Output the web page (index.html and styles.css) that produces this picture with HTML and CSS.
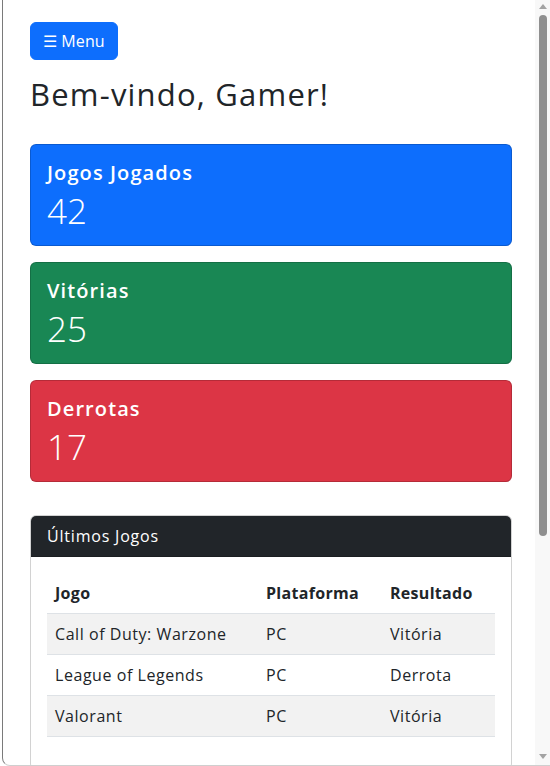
FILE: index.html
```html
<!DOCTYPE html>
<html lang="pt-BR">
<head>
<meta charset="utf-8">
<title>Dashboard Gamer</title>
<link rel="stylesheet" href="styles.css">
</head>
<body>
<div class="frame">
  <div class="viewport">
    <main class="page">
      <button class="btn-menu" type="button">☰ Menu</button>
      <h1 class="title">Bem-vindo, Gamer!</h1>

      <section class="stats">
        <div class="stat stat-blue">
          <h5 class="stat-title">Jogos Jogados</h5>
          <p class="stat-value">42</p>
        </div>
        <div class="stat stat-green">
          <h5 class="stat-title">Vitórias</h5>
          <p class="stat-value">25</p>
        </div>
        <div class="stat stat-red">
          <h5 class="stat-title">Derrotas</h5>
          <p class="stat-value">17</p>
        </div>
      </section>

      <section class="panel">
        <div class="panel-header">Últimos Jogos</div>
        <div class="panel-body">
          <table class="games">
            <thead>
              <tr>
                <th class="col-game">Jogo</th>
                <th class="col-plat">Plataforma</th>
                <th class="col-res">Resultado</th>
              </tr>
            </thead>
            <tbody>
              <tr class="striped"><td>Call of Duty: Warzone</td><td>PC</td><td>Vitória</td></tr>
              <tr><td>League of Legends</td><td>PC</td><td>Derrota</td></tr>
              <tr class="striped"><td>Valorant</td><td>PC</td><td>Vitória</td></tr>
            </tbody>
          </table>
        </div>
      </section>
    </main>
  </div>
  <div class="scrollbar" aria-hidden="true">
    <span class="arrow arrow-up"></span>
    <span class="thumb"></span>
    <span class="track-rest"></span>
    <span class="arrow arrow-down"></span>
  </div>
</div>
</body>
</html>
```

FILE: styles.css
```css
* { box-sizing: border-box; }

html, body {
  margin: 0;
  padding: 0;
  height: 100%;
  background: #ffffff;
  overflow: hidden;
}

body {
  font-family: "Open Sans", "Liberation Sans", sans-serif;
  color: #212529;
  font-size: 16px;
  line-height: 1.5;
}

.frame {
  display: flex;
  height: 766px;
  margin-left: 2px;
  border-left: 1px solid #7a7a7a;
  border-bottom: 1px solid #cfcfcf;
  border-bottom-left-radius: 8px;
  overflow: hidden;
  background: #ffffff;
}

.viewport {
  flex: 1 1 auto;
  min-width: 0;
  overflow: hidden;
}

.page {
  padding: 22px 23px 0 27px;
}

/* scrollbar rail */
.scrollbar {
  flex: 0 0 15px;
  display: flex;
  flex-direction: column;
  align-items: center;
  background: #f8f8f8;
  padding: 4px 0 6px;
}

.arrow {
  width: 0;
  height: 0;
  border-left: 4px solid transparent;
  border-right: 4px solid transparent;
}

.arrow-up {
  border-bottom: 5px solid #a3a3a3;
}

.arrow-down {
  border-top: 5px solid #a3a3a3;
}

.thumb {
  width: 8px;
  height: 521px;
  margin-top: 6px;
  border-radius: 4px;
  background: #8f8f8f;
}

.track-rest {
  flex: 1 1 auto;
}

.btn-menu {
  display: inline-block;
  font-family: inherit;
  font-size: 16px;
  line-height: 24px;
  color: #ffffff;
  background: #0d6efd;
  border: 1px solid #0d6efd;
  border-radius: 6px;
  padding: 6px 12px;
  letter-spacing: 0.1px;
  cursor: pointer;
}

.title {
  margin: 16px 0 32px;
  font-size: 31px;
  font-weight: 400;
  line-height: 36px;
  letter-spacing: 1.2px;
}

.stats {
  display: flex;
  flex-direction: column;
  gap: 16px;
  margin-bottom: 33px;
}

.stat {
  color: #ffffff;
  border: 1px solid rgba(0, 0, 0, 0.175);
  border-radius: 6px;
  padding: 16px;
}

.stat-blue { background: #0d6efd; }
.stat-green { background: #198754; }
.stat-red { background: #dc3545; }

.stat-title {
  margin: 0 0 8px;
  font-size: 20px;
  font-weight: 600;
  line-height: 24px;
  letter-spacing: 1.1px;
}

.stat-value {
  margin: 0;
  font-size: 35px;
  font-weight: 300;
  line-height: 36px;
}

.panel {
  border: 1px solid rgba(0, 0, 0, 0.175);
  border-radius: 6px;
}

.panel-header {
  background: #212529;
  color: #ffffff;
  padding: 8px 16px;
  line-height: 24px;
  letter-spacing: 0.8px;
  border-radius: 5px 5px 0 0;
  border-bottom: 1px solid rgba(0, 0, 0, 0.175);
}

.panel-body {
  padding: 16px;
}

.games {
  width: 100%;
  border-collapse: collapse;
  margin-bottom: 16px;
  table-layout: fixed;
}

.games th,
.games td {
  text-align: left;
  padding: 8px;
  line-height: 24px;
  border-bottom: 1px solid #dee2e6;
  letter-spacing: 0.55px;
}

.games th {
  font-weight: 700;
  letter-spacing: 0.3px;
}

.col-game { width: 211px; }
.col-plat { width: 124px; }
.col-res { width: auto; }

.games tr.striped td { background: #f2f2f2; }
```
